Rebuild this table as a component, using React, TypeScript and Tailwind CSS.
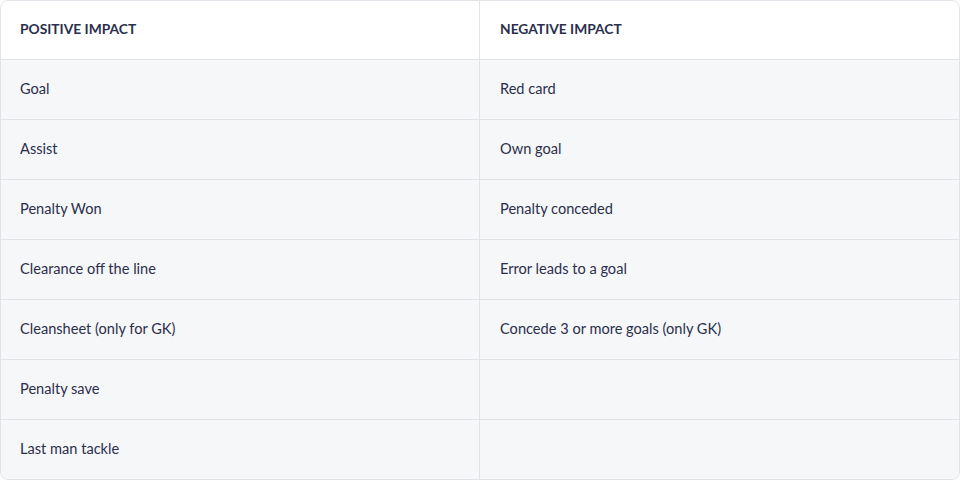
import React from "react";

const rows: [string, string][] = [
  ["Goal", "Red card"],
  ["Assist", "Own goal"],
  ["Penalty Won", "Penalty conceded"],
  ["Clearance off the line", "Error leads to a goal"],
  ["Cleansheet (only for GK)", "Concede 3 or more goals (only GK)"],
  ["Penalty save", ""],
  ["Last man tackle", ""],
];

const App = () => {
  return (
    <div className="w-[960px] h-[480px] bg-white font-['Lato',sans-serif] text-[#2b2f4c]">
      <div className="h-full border border-[#e1e3e8] rounded-lg overflow-hidden">
        {/* Header */}
        <div className="grid grid-cols-[479px_1fr] h-[59px] border-b border-[#e1e3e8] bg-white">
          <div className="flex items-center pl-[19px] pb-[1px] border-r border-[#e1e3e8] text-[13.8px] font-bold">
            POSITIVE IMPACT
          </div>
          <div className="flex items-center pl-5 pb-[1px] text-[13.8px] font-bold">
            NEGATIVE IMPACT
          </div>
        </div>

        {/* Body */}
        {rows.map(([pos, neg], i) => (
          <div
            key={i}
            className={`grid grid-cols-[479px_1fr] bg-[#f6f7f9] ${
              i < rows.length - 1 ? "h-[60px] border-b border-[#e1e3e8]" : "h-[59px]"
            }`}
          >
            <div className="flex items-center pl-[19px] pb-[1px] border-r border-[#e1e3e8] text-[14.6px]">
              {pos}
            </div>
            <div className="flex items-center pl-5 pb-[1px] text-[14.6px]">{neg}</div>
          </div>
        ))}
      </div>
    </div>
  );
};

export default App;
